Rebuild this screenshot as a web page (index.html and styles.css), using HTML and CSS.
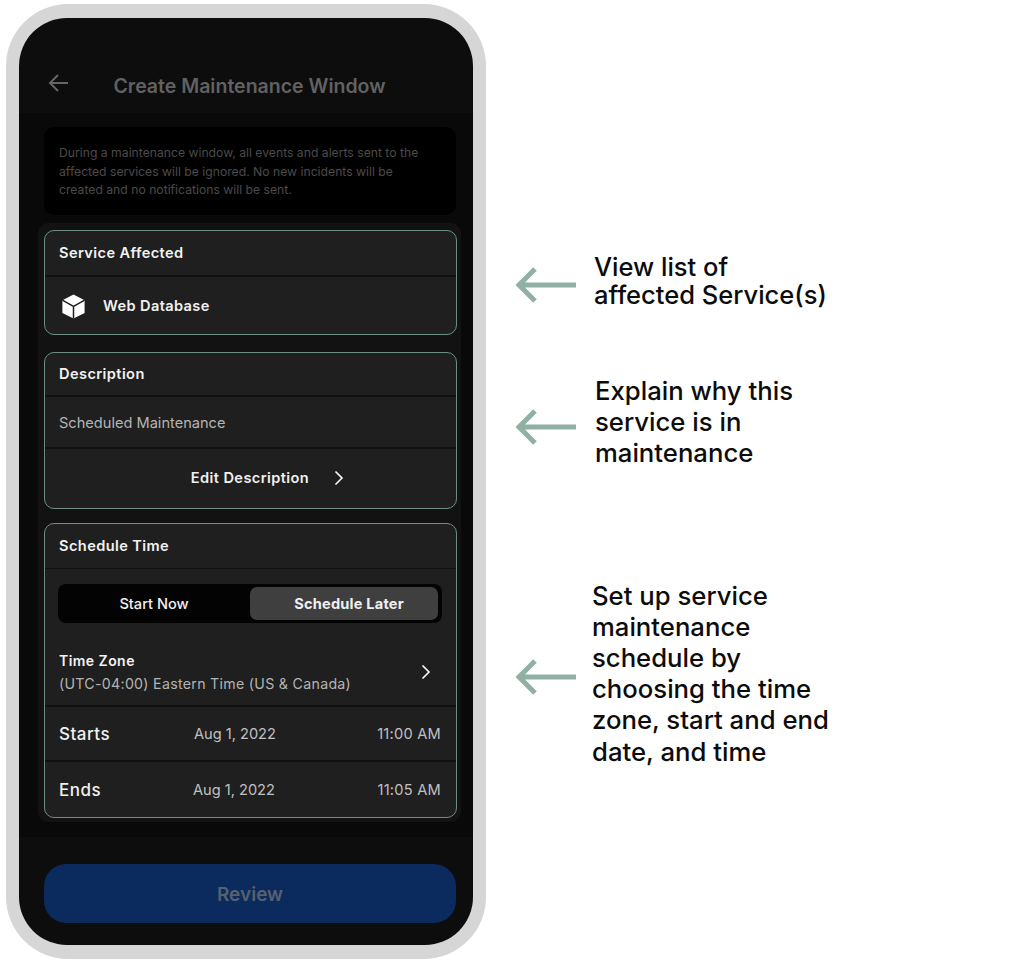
FILE: index.html
```html
<!DOCTYPE html>
<html lang="en">
<head>
<meta charset="utf-8">
<title>Create Maintenance Window</title>
<link rel="stylesheet" href="styles.css">
</head>
<body>
<div class="page">
  <div class="phone">
    <div class="screen">
      <header class="topbar">
        <svg class="back" width="22" height="20" viewBox="0 0 22 20" fill="none"><path d="M20 10H2M10 2 2 10l8 8" stroke="#666" stroke-width="2"/></svg>
        <h1 class="title">Create Maintenance Window</h1>
      </header>
      <main class="body">
        <p class="info">During a maintenance window, all events and alerts sent to the affected services will be ignored. No new incidents will be created and no notifications will be sent.</p>
        <div class="panel">
          <section class="card card-service">
            <div class="row head">Service Affected</div>
            <div class="row service">
              <svg class="cube" width="23" height="25" viewBox="0 0 23 25"><path fill="#fff" d="M11.5.4 22.6 6.2V19L11.5 24.6.4 19V6.2z"/><path fill="none" stroke="#1f1f1f" stroke-width="1.5" d="M.4 6.2 11.5 12.4 22.6 6.2M11.5 12.4v12.2"/></svg>
              <span class="service-name">Web Database</span>
            </div>
          </section>
          <section class="card card-desc">
            <div class="row head">Description</div>
            <div class="row desc">Scheduled Maintenance</div>
            <div class="row edit">
              <span>Edit Description</span>
              <svg class="chev edit-chev" width="10" height="16" viewBox="0 0 10 16" fill="none"><path d="m1.5 1.5 6.5 6.5-6.5 6.5" stroke="#fff" stroke-width="1.6"/></svg>
            </div>
          </section>
          <section class="card card-time">
            <div class="row head">Schedule Time</div>
            <div class="seg-wrap">
              <div class="seg">
                <div class="seg-item">Start Now</div>
                <div class="seg-item on">Schedule Later</div>
              </div>
            </div>
            <div class="row tz">
              <div>
                <div class="tz-label">Time Zone</div>
                <div class="tz-value">(UTC-04:00) Eastern Time (US &amp; Canada)</div>
              </div>
              <svg class="chev" width="10" height="16" viewBox="0 0 10 16" fill="none"><path d="m1.5 1.5 6.5 6.5-6.5 6.5" stroke="#fff" stroke-width="1.6"/></svg>
            </div>
            <div class="row when">
              <span class="when-label">Starts</span><span class="when-date">Aug 1, 2022</span><span class="when-time">11:00 AM</span>
            </div>
            <div class="row when last">
              <span class="when-label">Ends</span><span class="when-date">Aug 1, 2022</span><span class="when-time">11:05 AM</span>
            </div>
          </section>
        </div>
      </main>
      <footer class="foot"><div class="review">Review</div></footer>
    </div>
  </div>
  <aside class="notes">
    <div class="note note-1">
      <svg class="arrow" width="60" height="36" viewBox="0 0 60 36" fill="none"><path d="M60 18H4M19 2 3 18l16 16" stroke="#8fb0a3" stroke-width="5"/></svg>
      <p class="note-text tight">View list of<br>affected Service(s)</p>
    </div>
    <div class="note note-2">
      <svg class="arrow" width="60" height="36" viewBox="0 0 60 36" fill="none"><path d="M60 18H4M19 2 3 18l16 16" stroke="#8fb0a3" stroke-width="5"/></svg>
      <p class="note-text">Explain why this<br>service is in<br>maintenance</p>
    </div>
    <div class="note note-3">
      <svg class="arrow" width="60" height="36" viewBox="0 0 60 36" fill="none"><path d="M60 18H4M19 2 3 18l16 16" stroke="#8fb0a3" stroke-width="5"/></svg>
      <p class="note-text">Set up service<br>maintenance<br>schedule by<br>choosing the time<br>zone, start and end<br>date, and time</p>
    </div>
  </aside>
</div>
</body>
</html>
```
FILE: styles.css
```css
* { box-sizing: border-box; }
html, body { margin: 0; padding: 0; background: #fff; }
body { font-family: Inter, "Liberation Sans", sans-serif; }
.page { width: 1024px; height: 965px; padding: 4px 0 0 6px; display: flex; overflow: hidden; }

.phone { width: 480px; height: 955px; padding: 14px 13px; background: #d6d6d6; border-radius: 62px; flex: none; }
.screen { height: 927px; border-radius: 48px; background: #0d0d0d; overflow: hidden; display: flex; flex-direction: column; }

.topbar { height: 95px; flex: none; position: relative; display: flex; justify-content: center; align-items: flex-start; padding: 56px 0 0 7px; }
.back { position: absolute; left: 29px; top: 55px; }
.title { margin: 0; font-size: 19.5px; line-height: 25px; font-weight: 600; color: #616161; }

.body { height: 724px; flex: none; background: #090909; padding: 14px 0 0; }
.info { margin: 0 17px 0 25px; height: 88px; padding: 17px 30px 17px 15px; background: #000; border-radius: 10px; font-size: 12.2px; line-height: 18.5px; color: #4b4b4b; }
.panel { margin: 8px 12px 0 19px; height: 599px; padding: 7px 4px 0 6px; background: #121212; border-radius: 10px; }

.card { background: #1f1f1f; border: 1px solid #6d8f82; border-radius: 10px; margin-bottom: 17px; overflow: hidden; }
.row { border-bottom: 2px solid #111; padding: 0 14px; display: flex; align-items: center; }
.row:last-child { border-bottom: 0; }
.head { height: 46px; font-size: 14.6px; font-weight: 600; color: #f2f2f2; letter-spacing: .4px; }

.card-service { height: 105px; }
.service { height: 58px; gap: 18px; padding-left: 17px; }
.service-name { font-size: 14.6px; font-weight: 600; color: #f0f0f0; letter-spacing: .36px; }

.card-desc { height: 157px; margin-bottom: 14px; }
.card-desc .head { height: 44px; }
.desc { height: 52px; font-size: 14.6px; color: #b4b4b4; padding-top: 1px; }
.edit { height: 59px; justify-content: center; font-size: 14.6px; font-weight: 600; color: #f0f0f0; position: relative; letter-spacing: .4px; padding: 0 15px 2px 14px; }
.edit-chev { position: absolute; left: 289px; top: 21px; }

.card-time { height: 295px; margin-bottom: 0; }
.card-time .head { border-bottom-width: 1px; height: 45px; }
.seg-wrap { padding: 15px 14px 0 13px; }
.seg { height: 39px; background: #030303; border-radius: 8px; padding: 3px 4px 3px 0; display: flex; }
.seg-item { flex: 1; display: flex; align-items: center; justify-content: center; font-size: 14.6px; font-weight: 500; color: #f0f0f0; border-radius: 7px; }
.seg-item:first-child { flex: 0 0 192px; }
.seg-item.on { background: #3f3f3f; font-weight: 700; letter-spacing: .2px; padding-left: 10px; }
.tz { height: 84px; justify-content: space-between; padding: 16px 25px 0 14px; }
.tz-label { font-size: 14px; line-height: 20px; font-weight: 600; color: #f2f2f2; margin-bottom: 3px; letter-spacing: .45px; }
.tz-value { font-size: 14.2px; line-height: 20px; color: #b4b4b4; letter-spacing: .29px; }
.when { height: 55px; font-size: 14.6px; color: #c0c0c0; padding: 1px 15px 0 14px; }
.when.last { padding-top: 0; }
.when-label { width: 135px; font-size: 17px; font-weight: 500; color: #f0f0f0; letter-spacing: .5px; }
.when-date { flex: 1; }
.when.last .when-date { margin-left: -1px; }
.when-time { flex: none; letter-spacing: .25px; }

.foot { padding: 27px 17px 0 25px; }
.review { height: 59px; padding-top: 2px; border-radius: 22px; background: #0b2a5e; display: flex; align-items: center; justify-content: center; font-size: 19px; font-weight: 600; color: #566170; }

.notes { padding-left: 30px; flex: none; width: 500px; }
.note { display: flex; align-items: center; }
.arrow { flex: none; }
.note-text { margin: 0; font-size: 25.7px; line-height: 31.2px; font-weight: 500; color: #0c0c0c; }
.note-text.tight { font-size: 25.5px; line-height: 28px; }
.note-1 { margin-top: 249px; gap: 18px; }
.note-1 .arrow { margin-top: 8px; }
.note-2 { margin-top: 66px; gap: 19px; }
.note-2 .arrow { margin-top: 10px; }
.note-3 { margin-top: 111px; gap: 16px; }
.note-3 .arrow { margin-top: 8px; }
```
